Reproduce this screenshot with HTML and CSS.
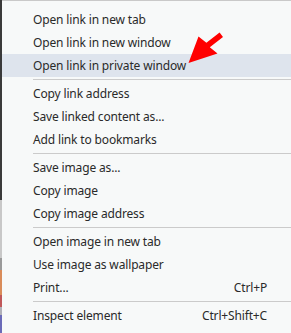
FILE: index.html
```html
<!DOCTYPE html>
<html lang="en">
  <head>
    <meta charset="UTF-8" />
    <title>Context menu</title>
    <link rel="stylesheet" href="styles.css">
  </head>
  <body>
    <div class="backdrop"></div>

    <div class="menu">
      <div class="item">Open link in new tab</div>
      <div class="item">Open link in new window</div>
      <div class="item active">Open link in private window</div>
      <div class="separator"></div>
      <div class="item">Copy link address</div>
      <div class="item">Save linked content as...</div>
      <div class="item">Add link to bookmarks</div>
      <div class="separator"></div>
      <div class="item">Save image as...</div>
      <div class="item">Copy image</div>
      <div class="item">Copy image address</div>
      <div class="separator"></div>
      <div class="item">Open image in new tab</div>
      <div class="item">Use image as wallpaper</div>
      <div class="item">Print... <span class="shortcut">Ctrl+P</span></div>
      <div class="separator"></div>
      <div class="item">Inspect element <span class="shortcut">Ctrl+Shift+C</span></div>

      <!-- red pointer drawn over the menu -->
      <svg class="pointer" width="291" height="80" viewBox="0 0 291 80">
        <polygon
          points="188.5,63 198.5,36.5 206.4,42.8 219.6,32.6 223,37 209.8,47.2 217.5,53.5"
          fill="#ff0000"
        />
      </svg>
    </div>
  </body>
</html>
```

FILE: styles.css
```css
body {
  margin: 0;
  display: flex;
  min-height: 333px;
  background: #f7f9f9;
  font-family: "Noto Sans", "Open Sans", sans-serif;
  font-size: 12px;
  letter-spacing: -0.15px;
  color: #2a2a2a;
}
.backdrop {
  width: 2px;
  flex-shrink: 0;
  background: linear-gradient(
    #3a3a3a 0,
    #3a3a3a 200px,
    #c8c8c8 200px,
    #c8c8c8 258px,
    #9a9a9a 258px,
    #9a9a9a 270px,
    #d98c5a 270px,
    #d98c5a 295px,
    #c0585a 295px,
    #c0585a 307px,
    #b0b0b8 307px,
    #b0b0b8 315px,
    #6a6ab8 315px
  );
}
.menu {
  flex: 1;
  position: relative;
  border-top: 1px solid #c9c9c9;
  padding: 7px 0;
}
.item {
  height: 23px;
  display: flex;
  align-items: center;
  justify-content: space-between;
  padding: 0 24px 0 31px;
}
.item.active {
  background: #dee4ed;
}
.separator {
  height: 1px;
  margin: 2px 0 2px 31px;
  background: #cbcbcb;
}
.pointer {
  position: absolute;
  left: -2px;
  top: -1px;
}
```
